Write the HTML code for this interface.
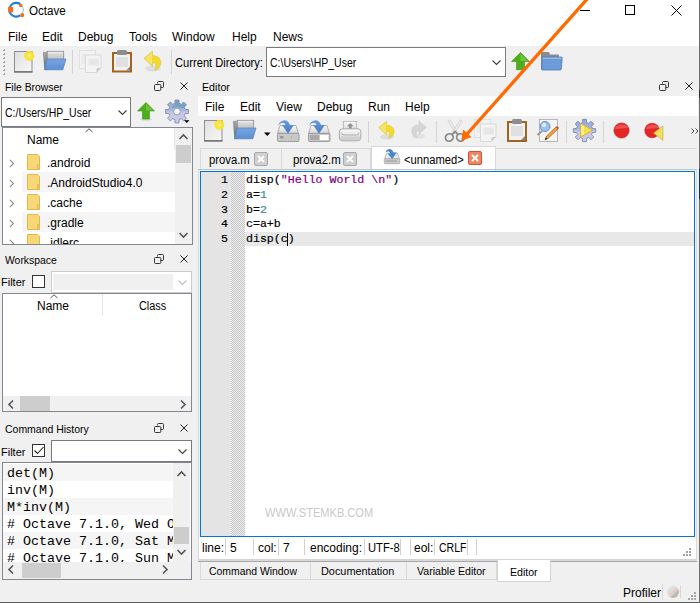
<!DOCTYPE html>
<html><head><meta charset="utf-8">
<style>
*{margin:0;padding:0;box-sizing:border-box}
html,body{width:700px;height:603px;overflow:hidden;background:#f0f0f0;font-family:"Liberation Sans",sans-serif;font-size:12px;color:#000}
.a{position:absolute}
.t{position:absolute;white-space:nowrap;line-height:14px}
.mono{font-family:"Liberation Mono",monospace}
.hl{position:absolute;height:1px}
.vl{position:absolute;width:1px}
svg{position:absolute;overflow:visible}
</style></head><body>
<div class="a" style="left:0;top:0;width:700px;height:603px;overflow:hidden">

<svg style="position:absolute;left:0;top:0" width="0" height="0"><defs>
 <linearGradient id="flap" x1="0" y1="0" x2="0" y2="1"><stop offset="0" stop-color="#a8a8a8"/><stop offset="1" stop-color="#6a6a6a"/></linearGradient>
 <linearGradient id="paper" x1="0" y1="0" x2="0" y2="1"><stop offset="0" stop-color="#ffffff"/><stop offset="0.3" stop-color="#d8d8d8"/><stop offset="1" stop-color="#c0c0c0"/></linearGradient>
 <linearGradient id="drv" x1="0" y1="0" x2="0" y2="1"><stop offset="0" stop-color="#fafafa"/><stop offset="1" stop-color="#d4d4d4"/></linearGradient>
 <linearGradient id="arr" x1="0" y1="0" x2="0" y2="1"><stop offset="0" stop-color="#6a9ee0"/><stop offset="1" stop-color="#3f78c4"/></linearGradient>
 <linearGradient id="blue" x1="0" y1="0" x2="0" y2="1"><stop offset="0" stop-color="#7aa6e0"/><stop offset="1" stop-color="#5b8ed2"/></linearGradient>
</defs></svg>
<!-- ============ title bar ============ -->
<div class="a" style="left:0;top:0;width:700px;height:46px;background:#fff"></div>
<svg style="left:4px;top:0" width="22" height="22" viewBox="4 0 22 22">
 <path d="M20.26 4.10 A6.9 6.9 0 1 0 20.26 15.40" fill="none" stroke="#1a7fe0" stroke-width="2.1"/>
 <path d="M21.59 14.19 A6.9 6.9 0 0 0 21.59 5.31" fill="none" stroke="#7cc4f4" stroke-width="1"/>
 <rect x="8.1" y="6.9" width="5" height="5.4" fill="#ff6a14"/>
 <rect x="19.2" y="3.9" width="3.2" height="3.2" rx="0.8" fill="#ff6a14"/>
 <rect x="20.4" y="13.3" width="3.6" height="3.6" rx="0.8" fill="#ff6a14"/>
</svg>
<div class="t" style="left:29px;top:4px;font-size:12px;transform:scaleX(0.967);transform-origin:0 0;">Octave</div>
<div class="hl" style="left:580px;top:10px;width:10px;background:#000"></div>
<div class="a" style="left:625px;top:5px;width:10px;height:10px;border:1px solid #000"></div>
<svg style="left:671px;top:5px" width="11" height="11" viewBox="0 0 11 11"><path d="M0.5 0.5L10.5 10.5M10.5 0.5L0.5 10.5" stroke="#000" stroke-width="1"/></svg>

<!-- ============ menu bar ============ -->
<div class="t" style="left:8px;top:30px">File</div>
<div class="t" style="left:42px;top:30px">Edit</div>
<div class="t" style="left:78px;top:30px">Debug</div>
<div class="t" style="left:129px;top:30px">Tools</div>
<div class="t" style="left:172px;top:30px">Window</div>
<div class="t" style="left:232px;top:30px">Help</div>
<div class="t" style="left:273px;top:30px">News</div>

<!-- ============ main toolbar ============ -->
<svg style="left:1px;top:48px" width="5" height="28"><rect x="2" y="1" width="1" height="1" fill="#fff"/><rect x="2" y="2" width="2" height="1" fill="#a0a0a0"/><rect x="3" y="1" width="1" height="2" fill="#a0a0a0"/><rect x="2" y="5" width="1" height="1" fill="#fff"/><rect x="2" y="6" width="2" height="1" fill="#a0a0a0"/><rect x="3" y="5" width="1" height="2" fill="#a0a0a0"/><rect x="2" y="9" width="1" height="1" fill="#fff"/><rect x="2" y="10" width="2" height="1" fill="#a0a0a0"/><rect x="3" y="9" width="1" height="2" fill="#a0a0a0"/><rect x="2" y="13" width="1" height="1" fill="#fff"/><rect x="2" y="14" width="2" height="1" fill="#a0a0a0"/><rect x="3" y="13" width="1" height="2" fill="#a0a0a0"/><rect x="2" y="17" width="1" height="1" fill="#fff"/><rect x="2" y="18" width="2" height="1" fill="#a0a0a0"/><rect x="3" y="17" width="1" height="2" fill="#a0a0a0"/><rect x="2" y="21" width="1" height="1" fill="#fff"/><rect x="2" y="22" width="2" height="1" fill="#a0a0a0"/><rect x="3" y="21" width="1" height="2" fill="#a0a0a0"/><rect x="2" y="25" width="1" height="1" fill="#fff"/><rect x="2" y="26" width="2" height="1" fill="#a0a0a0"/><rect x="3" y="25" width="1" height="2" fill="#a0a0a0"/></svg>
<!-- new -->
<svg style="left:14px;top:51px" width="20" height="22" viewBox="0 0 20 22">
 <defs><linearGradient id="pg" x1="0" y1="0" x2="1" y2="1"><stop offset="0" stop-color="#dedede"/><stop offset="0.5" stop-color="#ececec"/><stop offset="1" stop-color="#f8f8f8"/></linearGradient>
 <radialGradient id="glow"><stop offset="0" stop-color="#fffbe0"/><stop offset="0.25" stop-color="#fbea40"/><stop offset="0.8" stop-color="#f8e030" stop-opacity="0.9"/><stop offset="1" stop-color="#f8e030" stop-opacity="0"/></radialGradient></defs>
 <rect x="0.5" y="0.5" width="17.5" height="20.5" fill="url(#pg)" stroke="#8e8e8e" stroke-width="1"/>
 <rect x="0" y="20" width="18.5" height="1.6" fill="#7a7a7a"/>
 <circle cx="15.3" cy="4.8" r="5.6" fill="url(#glow)"/>
</svg>
<!-- open -->
<svg style="left:42px;top:51px" width="25" height="20" viewBox="0 0 25 20">
 <path d="M0.8 1.8 Q0.8 0.8 1.8 0.8 H5.5 V18.8 H2.5 Z" fill="url(#flap)"/>
 <rect x="5.3" y="0.3" width="16.4" height="8.7" fill="url(#paper)" stroke="#8a8a8a" stroke-width="0.8"/>
 <path d="M5 8 H24 L20.8 18.8 H2.5 Z" fill="url(#blue)" stroke="#4a7ec4" stroke-width="0.7"/>
</svg>
<div class="vl" style="left:72px;top:50px;height:24px;background:#d4d4d4"></div>
<!-- copy disabled -->
<svg style="left:79px;top:50px" width="24" height="24" viewBox="0 0 24 24">
 <rect x="0.5" y="0.5" width="16" height="18" fill="#f2f2f2" stroke="#dcdcdc" stroke-width="0.8"/>
 <path d="M3 5 H8 M3 7 H8 M3 9 H8 M2.5 11 H8 M2.5 13 H8" stroke="#e0e0e0" stroke-width="0.8"/>
 <path d="M6.5 5 H22 V17.5 L17.5 22.5 H6.5 Z" fill="#f4f4f4" stroke="#d2d2d2" stroke-width="0.8"/>
 <rect x="9.5" y="8.5" width="10.5" height="7" fill="#e6e6e6"/>
 <path d="M17.5 22.5 L17.5 18.5 L22 17.5 Z" fill="#c8c8c8"/>
</svg>
<!-- paste -->
<svg style="left:111px;top:49px" width="22" height="25" viewBox="0 0 22 25">
 <rect x="1" y="3" width="20" height="20.5" fill="#a3631e" rx="0.5"/>
 <rect x="3" y="5" width="16" height="16.5" fill="#f2f2f2"/>
 <rect x="5" y="8" width="12" height="10" fill="#e0e0e0"/>
 <path d="M15 21.5 L19 17.5 L19 21.5 Z" fill="#888"/>
 <rect x="6" y="1" width="10" height="5" rx="1.5" fill="#8d8d8d"/>
</svg>
<!-- undo -->
<svg style="left:142px;top:50px" width="22" height="23" viewBox="0 0 22 23">
 <ellipse cx="11" cy="18.5" rx="8" ry="3" fill="#000" opacity="0.08"/>
 <path d="M1.9 8.3 L10.5 1.2 L10.5 5.6 C16 5.8 19.2 9 18.8 13.5 C18.5 16.5 16 19 12.5 20.4 C14.5 17.5 15 12.8 10.5 12.3 L10.5 16.5 Z" fill="#f2da28" stroke="#d8c040" stroke-width="0.6"/><path d="M2.8 8.3 L10 2.5 L10 15.3 Z" fill="#f6e888" opacity="0.7"/>
</svg>
<div class="vl" style="left:171px;top:50px;height:24px;background:#d4d4d4"></div>

<div class="t" style="left:175px;top:56px;font-size:12px;transform:scaleX(0.929);transform-origin:0 0;">Current Directory:</div>
<div class="a" style="left:266px;top:47px;width:240px;height:30px;background:#fff;border:1px solid #7a7a7a"></div>
<div class="t" style="left:270px;top:56px;font-size:12px;transform:scaleX(0.874);transform-origin:0 0;">C:\Users\HP_User</div>
<svg style="left:492px;top:60px" width="10" height="6" viewBox="0 0 10 6"><path d="M0.5 0.5 L4.5 4.5 L8.5 0.5" fill="none" stroke="#404040" stroke-width="1.1"/></svg>
<!-- up arrow -->
<svg style="left:511px;top:52px" width="20" height="19" viewBox="0 0 20 19">
 <ellipse cx="10" cy="17.5" rx="6" ry="1.5" fill="#000" opacity="0.1"/>
 <path d="M9.5 0.5 L18.5 9.5 L13.5 9.5 L13.5 17.5 L5.5 17.5 L5.5 9.5 L0.5 9.5 Z" fill="#4fae1c" stroke="#3c9412" stroke-width="0.6"/>
 <path d="M9.5 1.5 L17 9 L9.5 9 Z" fill="#78cc44" opacity="0.7"/>
</svg>
<!-- folder -->
<svg style="left:540px;top:51px" width="23" height="20" viewBox="0 0 23 20">
 <path d="M1 2 Q1 1 2 1 H8 Q9 1 9.5 2 L10 3.5 H18 Q19 3.5 19 4.5 V18.5 H1 Z" fill="#8c8c8c"/>
 <path d="M2 6 L21.5 6 Q22.3 6 22.2 7 L21.3 18 Q21.2 19 20.2 19 H2.5 Q1.8 19 1.8 18 Z" fill="#6c9cd8" stroke="#4a78b8" stroke-width="0.8"/>
 <rect x="2.5" y="6.6" width="19" height="1" fill="#a8c4ec"/>
</svg>

<!-- ============ File Browser ============ -->
<div class="t" style="left:5px;top:80px;font-size:11px;transform:scaleX(0.945);transform-origin:0 0;">File Browser</div>
<svg style="left:154px;top:81px" width="10" height="10" viewBox="0 0 10 10"><path d="M3.5 2.5 V1.5 Q3.5 0.5 4.5 0.5 H8.5 Q9.5 0.5 9.5 1.5 V5.5 Q9.5 6.5 8.5 6.5 H6.8" fill="none" stroke="#333" stroke-width="1"/><rect x="0.5" y="3.5" width="6.3" height="6" rx="1" fill="none" stroke="#333" stroke-width="1"/></svg>
<svg style="left:180px;top:82px" width="8" height="8" viewBox="0 0 8 8"><path d="M0.5 0.5 L7.5 7.5 M7.5 0.5 L0.5 7.5" stroke="#222" stroke-width="1"/></svg>

<div class="a" style="left:1px;top:97px;width:130px;height:30px;background:#fff;border:1px solid #7a7a7a"></div>
<div class="t" style="left:5px;top:106px;font-size:12px;transform:scaleX(0.874);transform-origin:0 0;">C:/Users/HP_User</div>
<svg style="left:118px;top:110px" width="10" height="6" viewBox="0 0 10 6"><path d="M0.5 0.5 L4.5 4.5 L8.5 0.5" fill="none" stroke="#404040" stroke-width="1.1"/></svg>
<svg style="left:137px;top:102px" width="19" height="19" viewBox="0 0 19 19">
 <ellipse cx="9" cy="17.5" rx="6" ry="1.5" fill="#000" opacity="0.1"/>
 <path d="M9 0.5 L17.5 9 L12.5 9 L12.5 17 L5.5 17 L5.5 9 L0.5 9 Z" fill="#4fae1c" stroke="#3c9412" stroke-width="0.6"/>
 <path d="M9 1.5 L16 8.5 L9 8.5 Z" fill="#78cc44" opacity="0.7"/>
</svg>
<svg style="left:165px;top:100px" width="26" height="24" viewBox="0 0 26 24">
 <defs><linearGradient id="gg" x1="0" y1="0" x2="0" y2="1"><stop offset="0" stop-color="#8fa8d4"/><stop offset="0.45" stop-color="#a8b8e0"/><stop offset="0.55" stop-color="#c4c8e4"/><stop offset="1" stop-color="#c8cce6"/></linearGradient></defs>
 <path d="M9.92 3.36 L10.04 0.07 L13.96 0.07 L14.08 3.36 L16.29 4.28 L18.70 2.03 L21.47 4.80 L19.22 7.21 L20.14 9.42 L23.43 9.54 L23.43 13.46 L20.14 13.58 L19.22 15.79 L21.47 18.20 L18.70 20.97 L16.29 18.72 L14.08 19.64 L13.96 22.93 L10.04 22.93 L9.92 19.64 L7.71 18.72 L5.30 20.97 L2.53 18.20 L4.78 15.79 L3.86 13.58 L0.57 13.46 L0.57 9.54 L3.86 9.42 L4.78 7.21 L2.53 4.80 L5.30 2.03 L7.71 4.28 Z" fill="url(#gg)" stroke="#7a80a8" stroke-width="0.8" stroke-linejoin="round"/>
 <path d="M10.2 0.8 L13.8 0.8 L13.9 4 L16.3 5 L18.7 2.8 L21 5.2 L18 8.5 L12 7 L6 8.5 L10 4 Z" fill="#6a9cc0" opacity="0.75"/>
 <circle cx="12" cy="11.5" r="3.4" fill="#f6f6f6" stroke="#8088b0" stroke-width="0.8"/>
 <path d="M19 20.2 L24.5 20.2 L21.75 23 Z" fill="#000"/>
</svg>

<!-- file list -->
<div class="a" style="left:2px;top:127px;width:191px;height:118px;background:#fff;border:1px solid #828790"></div>
<div class="a" style="left:22px;top:172px;width:153px;height:20px;background:#f5f5f5"></div>
<div class="a" style="left:22px;top:212px;width:153px;height:20px;background:#f5f5f5"></div>
<svg style="left:85px;top:128px" width="8" height="5" viewBox="0 0 8 5"><path d="M0.5 4 L4 0.8 L7.5 4" fill="none" stroke="#555" stroke-width="1"/></svg>
<div class="t" style="left:27px;top:133px">Name</div>
<div class="vl" style="left:174px;top:128px;height:22px;background:#e5e5e5"></div>
<!-- vscroll -->
<div class="a" style="left:175px;top:128px;width:17px;height:116px;background:#f0f0f0"></div>
<div class="a" style="left:176px;top:145px;width:15px;height:18px;background:#cdcdcd"></div>
<svg style="left:179px;top:134px" width="9" height="6" viewBox="0 0 9 6"><path d="M0.5 5 L4.5 1 L8.5 5" fill="none" stroke="#555" stroke-width="1.6"/></svg>
<svg style="left:179px;top:232px" width="9" height="6" viewBox="0 0 9 6"><path d="M0.5 1 L4.5 5 L8.5 1" fill="none" stroke="#555" stroke-width="1.6"/></svg>
<!-- rows -->
<div class="a" style="left:0;top:150px;width:175px;height:94px;overflow:hidden"><svg style="left:9px;top:9px" width="6" height="9" viewBox="0 0 6 9"><path d="M0.8 0.8 L4.5 4.5 L0.8 8.2" fill="none" stroke="#8c8c8c" stroke-width="1.1"/></svg>
<svg style="left:27px;top:4px" width="14" height="16" viewBox="0 0 14 16"><path d="M0.5 0.5 H10.5 L12.5 2.5 V15.5 H0.5 Z" fill="#f8d876" stroke="#e3b84a" stroke-width="1"/><path d="M10.5 10.5 H12.5 V15.5 H10.5 Z" fill="#f3c860" stroke="#e3b84a" stroke-width="0.8"/></svg>
<div class="t" style="left:47px;top:6px">.android</div>
<svg style="left:9px;top:29px" width="6" height="9" viewBox="0 0 6 9"><path d="M0.8 0.8 L4.5 4.5 L0.8 8.2" fill="none" stroke="#8c8c8c" stroke-width="1.1"/></svg>
<svg style="left:27px;top:24px" width="14" height="16" viewBox="0 0 14 16"><path d="M0.5 0.5 H10.5 L12.5 2.5 V15.5 H0.5 Z" fill="#f8d876" stroke="#e3b84a" stroke-width="1"/><path d="M10.5 10.5 H12.5 V15.5 H10.5 Z" fill="#f3c860" stroke="#e3b84a" stroke-width="0.8"/></svg>
<div class="t" style="left:47px;top:26px">.AndroidStudio4.0</div>
<svg style="left:9px;top:49px" width="6" height="9" viewBox="0 0 6 9"><path d="M0.8 0.8 L4.5 4.5 L0.8 8.2" fill="none" stroke="#8c8c8c" stroke-width="1.1"/></svg>
<svg style="left:27px;top:44px" width="14" height="16" viewBox="0 0 14 16"><path d="M0.5 0.5 H10.5 L12.5 2.5 V15.5 H0.5 Z" fill="#f8d876" stroke="#e3b84a" stroke-width="1"/><path d="M10.5 10.5 H12.5 V15.5 H10.5 Z" fill="#f3c860" stroke="#e3b84a" stroke-width="0.8"/></svg>
<div class="t" style="left:47px;top:46px">.cache</div>
<svg style="left:9px;top:69px" width="6" height="9" viewBox="0 0 6 9"><path d="M0.8 0.8 L4.5 4.5 L0.8 8.2" fill="none" stroke="#8c8c8c" stroke-width="1.1"/></svg>
<svg style="left:27px;top:64px" width="14" height="16" viewBox="0 0 14 16"><path d="M0.5 0.5 H10.5 L12.5 2.5 V15.5 H0.5 Z" fill="#f8d876" stroke="#e3b84a" stroke-width="1"/><path d="M10.5 10.5 H12.5 V15.5 H10.5 Z" fill="#f3c860" stroke="#e3b84a" stroke-width="0.8"/></svg>
<div class="t" style="left:47px;top:66px">.gradle</div>
<svg style="left:9px;top:89px" width="6" height="9" viewBox="0 0 6 9"><path d="M0.8 0.8 L4.5 4.5 L0.8 8.2" fill="none" stroke="#8c8c8c" stroke-width="1.1"/></svg>
<svg style="left:27px;top:84px" width="14" height="16" viewBox="0 0 14 16"><path d="M0.5 0.5 H10.5 L12.5 2.5 V15.5 H0.5 Z" fill="#f8d876" stroke="#e3b84a" stroke-width="1"/><path d="M10.5 10.5 H12.5 V15.5 H10.5 Z" fill="#f3c860" stroke="#e3b84a" stroke-width="0.8"/></svg>
<div class="t" style="left:47px;top:86px">.idlerc</div></div>

<!-- ============ Workspace ============ -->
<div class="t" style="left:5px;top:253px;font-size:11px;transform:scaleX(0.945);transform-origin:0 0;">Workspace</div>
<svg style="left:154px;top:254px" width="10" height="10" viewBox="0 0 10 10"><path d="M3.5 2.5 V1.5 Q3.5 0.5 4.5 0.5 H8.5 Q9.5 0.5 9.5 1.5 V5.5 Q9.5 6.5 8.5 6.5 H6.8" fill="none" stroke="#333" stroke-width="1"/><rect x="0.5" y="3.5" width="6.3" height="6" rx="1" fill="none" stroke="#333" stroke-width="1"/></svg>
<svg style="left:180px;top:255px" width="8" height="8" viewBox="0 0 8 8"><path d="M0.5 0.5 L7.5 7.5 M7.5 0.5 L0.5 7.5" stroke="#222" stroke-width="1"/></svg>
<div class="t" style="left:1px;top:275px;font-size:11px">Filter</div>
<div class="a" style="left:32px;top:275px;width:13px;height:13px;background:#fff;border:1px solid #333"></div>
<div class="a" style="left:51px;top:271px;width:141px;height:22px;background:#fff;border:1px solid #cccccc"></div>
<div class="a" style="left:53px;top:274px;width:120px;height:16px;background:#f0f0f0"></div>
<svg style="left:178px;top:280px" width="10" height="6" viewBox="0 0 10 6"><path d="M0.5 0.5 L4.5 4.5 L8.5 0.5" fill="none" stroke="#bfbfbf" stroke-width="1.1"/></svg>

<div class="a" style="left:2px;top:293px;width:190px;height:119px;background:#fff;border:1px solid #828790"></div>
<svg style="left:50px;top:294px" width="8" height="5" viewBox="0 0 8 5"><path d="M0.5 4 L4 0.8 L7.5 4" fill="none" stroke="#555" stroke-width="1"/></svg>
<div class="t" style="left:37px;top:299px">Name</div>
<div class="vl" style="left:102px;top:294px;height:22px;background:#e5e5e5"></div>
<div class="t" style="left:139px;top:299px;font-size:12px;transform:scaleX(0.907);transform-origin:0 0;">Class</div>
<div class="a" style="left:3px;top:396px;width:188px;height:15px;background:#f0f0f0"></div>
<div class="a" style="left:20px;top:396px;width:30px;height:15px;background:#cdcdcd"></div>
<svg style="left:8px;top:400px" width="6" height="9" viewBox="0 0 6 9"><path d="M5 0.5 L1 4.5 L5 8.5" fill="none" stroke="#555" stroke-width="1.6"/></svg>
<svg style="left:180px;top:400px" width="6" height="9" viewBox="0 0 6 9"><path d="M1 0.5 L5 4.5 L1 8.5" fill="none" stroke="#555" stroke-width="1.6"/></svg>

<!-- ============ Command History ============ -->
<div class="t" style="left:5px;top:422px;font-size:11px;transform:scaleX(0.952);transform-origin:0 0;">Command History</div>
<svg style="left:154px;top:423px" width="10" height="10" viewBox="0 0 10 10"><path d="M3.5 2.5 V1.5 Q3.5 0.5 4.5 0.5 H8.5 Q9.5 0.5 9.5 1.5 V5.5 Q9.5 6.5 8.5 6.5 H6.8" fill="none" stroke="#333" stroke-width="1"/><rect x="0.5" y="3.5" width="6.3" height="6" rx="1" fill="none" stroke="#333" stroke-width="1"/></svg>
<svg style="left:180px;top:424px" width="8" height="8" viewBox="0 0 8 8"><path d="M0.5 0.5 L7.5 7.5 M7.5 0.5 L0.5 7.5" stroke="#222" stroke-width="1"/></svg>
<div class="t" style="left:1px;top:445px;font-size:11px">Filter</div>
<div class="a" style="left:32px;top:444px;width:13px;height:13px;background:#fff;border:1px solid #333"></div>
<svg style="left:34px;top:446px" width="10" height="9" viewBox="0 0 10 9"><path d="M0.5 4.5 L3.5 7.5 L9.5 1" fill="none" stroke="#222" stroke-width="1.1"/></svg>
<div class="a" style="left:51px;top:440px;width:141px;height:22px;background:#fff;border:1px solid #7a7a7a"></div>
<svg style="left:178px;top:449px" width="10" height="6" viewBox="0 0 10 6"><path d="M0.5 0.5 L4.5 4.5 L8.5 0.5" fill="none" stroke="#404040" stroke-width="1.1"/></svg>

<div class="a" style="left:2px;top:462px;width:190px;height:118px;background:#fff;border:1px solid #828790;overflow:hidden">
 <div class="a" style="left:0;top:1px;width:171px;height:17px;background:#f5f5f5"></div>
 <div class="a" style="left:0;top:35px;width:171px;height:17px;background:#f5f5f5"></div>
 <div class="a" style="left:0;top:69px;width:171px;height:17px;background:#f5f5f5"></div>
 <div class="a mono" style="left:4px;top:2px;width:167px;height:97px;overflow:hidden;font-size:13.33px;line-height:17px;white-space:pre">det(M)
inv(M)
M*inv(M)
# Octave 7.1.0, Wed Oct
# Octave 7.1.0, Sat May
# Octave 7.1.0, Sun May</div>
 <div class="a" style="left:170px;top:0;width:17px;height:99px;background:#f0f0f0"></div>
 <div class="a" style="left:171px;top:64px;width:15px;height:17px;background:#cdcdcd"></div>
 <div class="a" style="left:0;top:99px;width:188px;height:17px;background:#f0f0f0"></div>
 <div class="a" style="left:19px;top:100px;width:39px;height:15px;background:#cdcdcd"></div>
</div>
<svg style="left:177px;top:471px" width="9" height="6" viewBox="0 0 9 6"><path d="M0.5 5 L4.5 1 L8.5 5" fill="none" stroke="#555" stroke-width="1.6"/></svg>
<svg style="left:177px;top:549px" width="9" height="6" viewBox="0 0 9 6"><path d="M0.5 1 L4.5 5 L8.5 1" fill="none" stroke="#555" stroke-width="1.6"/></svg>
<svg style="left:8px;top:565px" width="6" height="9" viewBox="0 0 6 9"><path d="M5 0.5 L1 4.5 L5 8.5" fill="none" stroke="#555" stroke-width="1.6"/></svg>
<svg style="left:162px;top:565px" width="6" height="9" viewBox="0 0 6 9"><path d="M1 0.5 L5 4.5 L1 8.5" fill="none" stroke="#555" stroke-width="1.6"/></svg>

<!-- ============ Editor ============ -->
<div class="t" style="left:202px;top:80px;font-size:11px;transform:scaleX(0.97);transform-origin:0 0">Editor</div>
<svg style="left:659px;top:81px" width="10" height="10" viewBox="0 0 10 10"><path d="M3.5 2.5 V1.5 Q3.5 0.5 4.5 0.5 H8.5 Q9.5 0.5 9.5 1.5 V5.5 Q9.5 6.5 8.5 6.5 H6.8" fill="none" stroke="#333" stroke-width="1"/><rect x="0.5" y="3.5" width="6.3" height="6" rx="1" fill="none" stroke="#333" stroke-width="1"/></svg>
<svg style="left:685px;top:82px" width="8" height="8" viewBox="0 0 8 8"><path d="M0.5 0.5 L7.5 7.5 M7.5 0.5 L0.5 7.5" stroke="#222" stroke-width="1"/></svg>
<div class="a" style="left:198px;top:96px;width:500px;height:20px;background:#fff"></div>
<div class="t" style="left:205px;top:100px">File</div>
<div class="t" style="left:240px;top:100px">Edit</div>
<div class="t" style="left:276px;top:100px">View</div>
<div class="t" style="left:317px;top:100px">Debug</div>
<div class="t" style="left:368px;top:100px">Run</div>
<div class="t" style="left:405px;top:100px">Help</div>

<!-- editor toolbar -->

<!-- new -->
<svg style="left:204px;top:120px" width="20" height="22" viewBox="0 0 20 22">
 <rect x="0.5" y="0.5" width="17.5" height="20.5" fill="url(#pg)" stroke="#8e8e8e" stroke-width="1"/>
 <rect x="0" y="20" width="18.5" height="1.6" fill="#7a7a7a"/>
 <circle cx="15.3" cy="4.8" r="5.6" fill="url(#glow)"/>
</svg>
<!-- open -->
<svg style="left:232px;top:120px" width="25" height="20" viewBox="0 0 25 20">
 <path d="M0.8 1.8 Q0.8 0.8 1.8 0.8 H5.5 V18.8 H2.5 Z" fill="url(#flap)"/>
 <rect x="5.3" y="0.3" width="16.4" height="8.7" fill="url(#paper)" stroke="#8a8a8a" stroke-width="0.8"/>
 <path d="M5 8 H24 L20.8 18.8 H2.5 Z" fill="url(#blue)" stroke="#4a7ec4" stroke-width="0.7"/>
</svg>
<svg style="left:264px;top:132px" width="7" height="5" viewBox="0 0 7 5"><path d="M0 0.5 H6.5 L3.25 4 Z" fill="#000"/></svg>
<!-- save -->
<svg style="left:277px;top:119px" width="23" height="24" viewBox="0 0 23 24">
 <path d="M3 6.5 H19 L21.5 14.5 H0.5 Z" fill="url(#drv)" stroke="#a0a0a0" stroke-width="0.8"/>
 <rect x="0.5" y="14.3" width="21.5" height="8.2" rx="1.2" fill="#c8c8c8" stroke="#8e8e8e" stroke-width="0.8"/>
 <rect x="3" y="17" width="3.5" height="2.5" fill="#9a9a9a"/>
 <rect x="14" y="17" width="1" height="3" fill="#b4b4b4"/>
 <path d="M1 7 C3 0 11 -1 13 6 L17 6 L11 14.6 L5 6 L8.5 6 C7.5 3 4 3 1 7 Z" fill="url(#arr)"/>
</svg>
<!-- save as -->
<svg style="left:308px;top:119px" width="23" height="24" viewBox="0 0 23 24">
 <path d="M3 6.5 H19 L21.5 14.5 H0.5 Z" fill="url(#drv)" stroke="#a0a0a0" stroke-width="0.8"/>
 <rect x="0.5" y="14.3" width="21.5" height="8.2" rx="1.2" fill="#c8c8c8" stroke="#8e8e8e" stroke-width="0.8"/>
 <rect x="2" y="16" width="9" height="5" fill="#a8a8a8"/>
 <rect x="12" y="16" width="8.5" height="5" fill="#fff"/>
 <path d="M1 7 C3 0 11 -1 13 6 L17 6 L11 14.6 L5 6 L8.5 6 C7.5 3 4 3 1 7 Z" fill="url(#arr)"/>
</svg>
<!-- print -->
<svg style="left:339px;top:121px" width="23" height="21" viewBox="0 0 23 21">
 <rect x="4.3" y="0.3" width="13.4" height="9.5" fill="url(#drv)" stroke="#a8a8a8" stroke-width="0.7"/>
 <path d="M11.3 2 L14.5 5.3 H12.6 V7.8 H10 V5.3 H8.1 Z" fill="#909090"/>
 <rect x="0.4" y="7.8" width="21.5" height="12" rx="3" fill="url(#drv)" stroke="#999" stroke-width="0.8"/>
 <path d="M2.5 11.5 Q2.5 14 5 14 H17.5 Q20 14 20 11.5" fill="none" stroke="#a8a8a8" stroke-width="0.9"/>
 <rect x="1" y="15.5" width="20.5" height="3.8" rx="1.5" fill="#d0d0d0"/>
</svg>
<div class="vl" style="left:368px;top:121px;height:22px;background:#d4d4d4"></div>
<!-- undo -->
<svg style="left:377px;top:120px" width="20" height="21" viewBox="0 0 22 23">
 <ellipse cx="11" cy="18.5" rx="8" ry="3" fill="#000" opacity="0.08"/>
 <path d="M1.9 8.3 L10.5 1.2 L10.5 5.6 C16 5.8 19.2 9 18.8 13.5 C18.5 16.5 16 19 12.5 20.4 C14.5 17.5 15 12.8 10.5 12.3 L10.5 16.5 Z" fill="#f2da28" stroke="#d8c040" stroke-width="0.6"/><path d="M2.8 8.3 L10 2.5 L10 15.3 Z" fill="#f6e888" opacity="0.7"/>
</svg>
<!-- redo -->
<svg style="left:409px;top:120px" width="19" height="20" viewBox="0 0 22 23">
 <ellipse cx="11" cy="18.5" rx="8" ry="3" fill="#000" opacity="0.06"/>
 <path d="M20.1 8.3 L11.5 1.2 L11.5 5.6 C6 5.8 2.8 9 3.2 13.5 C3.5 16.5 6 19 9.5 20.4 C7.5 17.5 7 12.8 11.5 12.3 L11.5 16.5 Z" fill="#d6d6d6" stroke="#c4c4c4" stroke-width="0.6"/>
</svg>
<div class="vl" style="left:436px;top:121px;height:22px;background:#d4d4d4"></div>
<!-- scissors -->
<svg style="left:444px;top:119px" width="22" height="24" viewBox="0 0 22 24">
 <path d="M3.8 2 L5.8 0.8 L13 12.5 L11.2 14 Z M18.2 2 L16.2 0.8 L9 12.5 L10.8 14 Z" fill="#ececec" stroke="#cdcdcd" stroke-width="0.7"/>
 <ellipse cx="5.3" cy="18.5" rx="3.9" ry="3.6" transform="rotate(-35 5.3 18.5)" fill="none" stroke="#8c8c8c" stroke-width="1.8"/>
 <ellipse cx="16.5" cy="18.5" rx="3.9" ry="3.6" transform="rotate(35 16.5 18.5)" fill="none" stroke="#8c8c8c" stroke-width="1.8"/>
 <path d="M8 15.5 L11 12.5 L14 15.5" fill="none" stroke="#8c8c8c" stroke-width="1.8"/>
</svg>
<!-- copy disabled -->
<svg style="left:474px;top:119px" width="24" height="24" viewBox="0 0 24 24">
 <rect x="0.5" y="0.5" width="16" height="18" fill="#f2f2f2" stroke="#dcdcdc" stroke-width="0.8"/>
 <path d="M3 5 H8 M3 7 H8 M3 9 H8 M2.5 11 H8 M2.5 13 H8" stroke="#e0e0e0" stroke-width="0.8"/>
 <path d="M6.5 5 H22 V17.5 L17.5 22.5 H6.5 Z" fill="#f4f4f4" stroke="#d2d2d2" stroke-width="0.8"/>
 <rect x="9.5" y="8.5" width="10.5" height="7" fill="#e6e6e6"/>
 <path d="M17.5 22.5 L17.5 18.5 L22 17.5 Z" fill="#c8c8c8"/>
</svg>
<!-- paste -->
<svg style="left:506px;top:118px" width="22" height="25" viewBox="0 0 22 25">
 <rect x="1" y="3" width="20" height="21" fill="#a3631e" rx="0.5"/>
 <rect x="3" y="5" width="16" height="17" fill="#f2f2f2"/>
 <rect x="5" y="8" width="12" height="10" fill="#e0e0e0"/>
 <path d="M15 22 L19 18 L19 22 Z" fill="#888"/>
 <rect x="6" y="1" width="10" height="5" rx="1.5" fill="#8d8d8d"/>
</svg>
<!-- find -->
<svg style="left:536px;top:119px" width="23" height="23" viewBox="0 0 23 23">
 <rect x="3.5" y="0.5" width="18" height="22" fill="#f4f4f4" stroke="#a8a8a8" stroke-width="0.8"/>
 <path d="M6 12 L1.5 16" stroke="#9a9a9a" stroke-width="2.2"/>
 <circle cx="9" cy="7.5" r="5" fill="#9cc0ec" stroke="#6a8fc0" stroke-width="1"/>
 <circle cx="8" cy="6" r="2" fill="#e8f2ff"/>
 <path d="M9 21 L10.5 17 L20 8 L22 10 L12.5 19 Z" fill="#f0a040" stroke="#905010" stroke-width="0.6"/>
 <path d="M20 8 L21 7 L23 9 L22 10 Z" fill="#e03030"/>
 <path d="M9 21 L10 18.5 L11.5 20 Z" fill="#222"/>
</svg>
<div class="vl" style="left:566px;top:121px;height:22px;background:#d4d4d4"></div>
<!-- run gear -->
<svg style="left:572px;top:119px" width="25" height="24" viewBox="0 0 25 24">
 <path d="M10.47 3.55 L10.59 0.36 L14.41 0.36 L14.53 3.55 L16.68 4.45 L19.02 2.27 L21.73 4.98 L19.55 7.32 L20.45 9.47 L23.64 9.59 L23.64 13.41 L20.45 13.53 L19.55 15.68 L21.73 18.02 L19.02 20.73 L16.68 18.55 L14.53 19.45 L14.41 22.64 L10.59 22.64 L10.47 19.45 L8.32 18.55 L5.98 20.73 L3.27 18.02 L5.45 15.68 L4.55 13.53 L1.36 13.41 L1.36 9.59 L4.55 9.47 L5.45 7.32 L3.27 4.98 L5.98 2.27 L8.32 4.45 Z" fill="url(#gg)" stroke="#7a80a8" stroke-width="0.8" stroke-linejoin="round"/>
 <circle cx="12.5" cy="11.5" r="3.2" fill="#eef0f8"/>
 <path d="M8.5 4.3 L20.5 11.3 L8.5 18.3 Z" fill="#f6e04a" stroke="#d8a030" stroke-width="0.7" stroke-linejoin="round"/>
 <path d="M9.3 6 L12 7.6 L12 15 L9.3 16.6 Z" fill="#fff6b0" opacity="0.7"/>
</svg>
<div class="vl" style="left:603px;top:121px;height:22px;background:#d4d4d4"></div>
<svg style="left:613px;top:122px" width="17" height="17" viewBox="0 0 17 17">
 <circle cx="8.5" cy="8.5" r="7.6" fill="#e52626" stroke="#c81818" stroke-width="0.6"/>
 <path d="M1.5 7 C3 2 13 1 15.5 6 Z" fill="#f07070" opacity="0.6"/>
</svg>
<svg style="left:644px;top:122px" width="20" height="19" viewBox="0 0 20 19">
 <circle cx="8.1" cy="8.5" r="7.3" fill="#e52626" stroke="#c81818" stroke-width="0.6"/>
 <path d="M1.5 7 C3 2 13 1 15 6 Z" fill="#f07070" opacity="0.6"/>
 <path d="M9.6 11.1 L18.9 4 L18.9 18.3 Z" fill="#f2e060" stroke="#c8b030" stroke-width="0.7"/>
</svg>
<svg style="left:691px;top:128px" width="8" height="6" viewBox="0 0 8 6"><path d="M0.5 0.5 L3 3 L0.5 5.5 M4.5 0.5 L7 3 L4.5 5.5" fill="none" stroke="#444" stroke-width="1"/></svg>


<!-- tabs -->
<div class="a" style="left:200px;top:148px;width:497px;height:22px;border-top:1px solid #d9d9d9"></div>
<div class="vl" style="left:200px;top:148px;height:22px;background:#d9d9d9"></div>
<div class="vl" style="left:281px;top:149px;height:21px;background:#d9d9d9"></div>
<div class="vl" style="left:370px;top:149px;height:21px;background:#d9d9d9"></div>
<div class="a" style="left:371px;top:146px;width:125px;height:25px;background:#fff;border:1px solid #d9d9d9;border-bottom:none"></div>
<div class="t" style="left:209px;top:153px;font-size:12px;transform:scaleX(0.938);transform-origin:0 0;">prova.m</div>
<div class="a" style="left:254px;top:152px;width:14px;height:14px;background:#cfcfcf;border:1px solid #a8a8a8;border-radius:2px"></div>
<svg style="left:257px;top:155px" width="8" height="8" viewBox="0 0 8 8"><path d="M1 1 L7 7 M7 1 L1 7" stroke="#fff" stroke-width="1.8"/></svg>
<div class="t" style="left:293px;top:153px;font-size:12px;transform:scaleX(0.954);transform-origin:0 0;">prova2.m</div>
<div class="a" style="left:343px;top:152px;width:14px;height:14px;background:#cfcfcf;border:1px solid #a8a8a8;border-radius:2px"></div>
<svg style="left:346px;top:155px" width="8" height="8" viewBox="0 0 8 8"><path d="M1 1 L7 7 M7 1 L1 7" stroke="#fff" stroke-width="1.8"/></svg>
<!-- save icon in tab -->
<svg style="left:383px;top:146px" width="18" height="19" viewBox="0 0 18 19">
 <path d="M3.5 7 H14.5 L16.5 13 H1.5 Z" fill="#e6e6e6" stroke="#b0b0b0" stroke-width="0.7"/>
 <rect x="1.3" y="12.7" width="15.4" height="5" rx="0.8" fill="#cacaca" stroke="#a4a4a4" stroke-width="0.7"/>
 <rect x="3" y="14.5" width="11" height="1" fill="#9a9a9a"/>
 <path d="M2.5 6.5 C3.5 2 9 1.5 10.5 6.5 L13.7 6.5 L9.2 12.9 L4.5 7.5 L7.3 7.5 C6.5 5.2 4.5 5.2 2.5 6.5 Z" fill="#4a86d0"/>
</svg>
<div class="t" style="left:404px;top:153px;font-size:12px;transform:scaleX(0.933);transform-origin:0 0;">&lt;unnamed&gt;</div>
<div class="a" style="left:468px;top:151px;width:14px;height:14px;background:#ea8a62;border:1px solid #e04a3c;border-radius:2px"></div>
<svg style="left:471px;top:154px" width="8" height="8" viewBox="0 0 8 8"><path d="M1 1 L7 7 M7 1 L1 7" stroke="#fff" stroke-width="1.8"/></svg>

<!-- editor frame -->
<div class="a" style="left:198px;top:169px;width:499px;height:392px;border:1px solid #d9d9d9;border-top:1px solid #c4c4c4"></div>
<div class="a" style="left:200px;top:171px;width:495px;height:366px;background:#fff;border:1px solid #0078d7"></div>
<div class="a" style="left:201px;top:172px;width:30px;height:364px;background:#e4e4e4"></div>
<div class="a" style="left:231px;top:172px;width:14px;height:364px;background:repeating-conic-gradient(#c8c8c8 0 25%,#ececec 0 50%) 0 0/2px 2px"></div>
<div class="a" style="left:245px;top:232px;width:449px;height:14px;background:#e8e8e8"></div>
<div class="a mono" style="left:202px;top:173px;width:26px;text-align:right;font-size:11.6px;line-height:14.75px;white-space:pre;color:#000;-webkit-text-stroke:0.2px">1
2
3
4
5</div>
<div class="a mono" style="left:246px;top:173px;font-size:11.6px;line-height:14.75px;white-space:pre;color:#000;-webkit-text-stroke:0.2px">disp(<span style="color:#800080">"Hello World \n"</span>)
a=<span style="color:#3f8a90">1</span>
b=<span style="color:#3f8a90">2</span>
c=a+b
disp(c)</div>
<div class="vl" style="left:287px;top:233px;height:13px;background:#000"></div>
<div class="t" style="left:265px;top:506px;color:#c9c9c9;transform:scaleX(0.922);transform-origin:0 0">WWW.STEMKB.COM</div>

<!-- status bar -->
<div class="a" style="left:199px;top:537px;width:497px;height:22px;background:#fff"></div>
<div class="hl" style="left:198px;top:559px;width:499px;background:#d4d4d4"></div>
<div class="hl" style="left:198px;top:561px;width:499px;background:#a8a8a8"></div>
<div class="t" style="left:202px;top:541px">line:</div>
<div class="vl" style="left:225px;top:539px;height:16px;background:#d0d0d0"></div>
<div class="t" style="left:230px;top:541px">5</div>
<div class="vl" style="left:253px;top:539px;height:16px;background:#d0d0d0"></div>
<div class="t" style="left:258px;top:541px">col:</div>
<div class="vl" style="left:278px;top:539px;height:16px;background:#d0d0d0"></div>
<div class="t" style="left:283px;top:541px">7</div>
<div class="vl" style="left:304px;top:539px;height:16px;background:#d0d0d0"></div>
<div class="t" style="left:310px;top:541px">encoding:</div>
<div class="vl" style="left:364px;top:539px;height:16px;background:#d0d0d0"></div>
<div class="t" style="left:368px;top:541px;font-size:12px;transform:scaleX(0.936);transform-origin:0 0;">UTF-8</div>
<div class="vl" style="left:400px;top:539px;height:16px;background:#d0d0d0"></div>
<div class="vl" style="left:410px;top:539px;height:16px;background:#d0d0d0"></div>
<div class="t" style="left:414px;top:541px">eol:</div>
<div class="vl" style="left:434px;top:539px;height:16px;background:#d0d0d0"></div>
<div class="t" style="left:439px;top:541px;font-size:12px;transform:scaleX(0.877);transform-origin:0 0;">CRLF</div>
<div class="vl" style="left:467px;top:539px;height:16px;background:#d0d0d0"></div>
<div class="vl" style="left:476px;top:539px;height:16px;background:#d0d0d0"></div>
<svg style="left:682px;top:548px" width="10" height="10" viewBox="0 0 10 10"><g fill="#a0a0a0"><rect x="7" y="0" width="2" height="2"/><rect x="4" y="3" width="2" height="2"/><rect x="7" y="3" width="2" height="2"/><rect x="1" y="6" width="2" height="2"/><rect x="4" y="6" width="2" height="2"/><rect x="7" y="6" width="2" height="2"/></g></svg>

<!-- bottom tabs -->
<div class="a" style="left:200px;top:562px;width:297px;height:18px;border:1px solid #d9d9d9;border-top:none"></div>
<div class="vl" style="left:310px;top:562px;height:17px;background:#d9d9d9"></div>
<div class="vl" style="left:406px;top:562px;height:17px;background:#d9d9d9"></div>
<div class="a" style="left:497px;top:560px;width:54px;height:22px;background:#fff;border:1px solid #d4d4d4;border-top:none"></div>
<div class="t" style="left:209px;top:564px;font-size:11px;transform:scaleX(0.946);transform-origin:0 0;">Command Window</div>
<div class="t" style="left:321px;top:564px;font-size:11px;transform:scaleX(0.99);transform-origin:0 0;">Documentation</div>
<div class="t" style="left:417px;top:564px;font-size:11px;transform:scaleX(0.962);transform-origin:0 0;">Variable Editor</div>
<div class="t" style="left:510px;top:565px;font-size:11px;transform:scaleX(0.96);transform-origin:0 0">Editor</div>

<!-- main status bar -->
<div class="t" style="left:623px;top:586px;font-size:12px;transform:scaleX(1.0);transform-origin:0 0;">Profiler</div>
<div class="vl" style="left:662px;top:584px;height:16px;background:#d8d8d8"></div>
<svg style="left:667px;top:586px" width="12" height="12" viewBox="0 0 12 12">
 <defs><clipPath id="bc"><circle cx="6" cy="6" r="6"/></clipPath></defs>
 <g clip-path="url(#bc)" transform="rotate(-45 6 6)">
  <rect x="-3" y="-3" width="18" height="4.5" fill="#f2e4da"/>
  <rect x="-3" y="1.5" width="18" height="3" fill="#dcdcdc"/>
  <rect x="-3" y="4.5" width="18" height="3.5" fill="#e2cccc"/>
  <rect x="-3" y="8" width="18" height="7" fill="#b8b8b0"/>
 </g>
</svg>
<div class="vl" style="left:680px;top:585px;height:13px;background:#d8d8d8"></div>
<svg style="left:688px;top:592px" width="9" height="9" viewBox="0 0 9 9"><g fill="#a8a8a8"><rect x="6" y="0" width="2" height="2"/><rect x="3" y="3" width="2" height="2"/><rect x="6" y="3" width="2" height="2"/><rect x="0" y="6" width="2" height="2"/><rect x="3" y="6" width="2" height="2"/><rect x="6" y="6" width="2" height="2"/></g></svg>
<div class="hl" style="left:0;top:602px;width:700px;background:#5a5a5a"></div>
<div class="vl" style="left:699px;top:0;height:603px;background:#6e6e6e"></div>
<div class="vl" style="left:699px;top:169px;height:30px;background:#0c2a5c"></div>
<div class="vl" style="left:699px;top:90px;height:8px;background:#333"></div>

<!-- orange arrow -->
<svg style="left:0;top:0" width="700" height="603" viewBox="0 0 700 603">
 <line x1="590.3" y1="-4.5" x2="466.2" y2="135" stroke="#ff6a00" stroke-width="3.3"/>
 <path d="M461.2 141 L463.2 129.5 L471.5 137 Z" fill="#ff6a00"/>
</svg>

</div>
</body></html>
